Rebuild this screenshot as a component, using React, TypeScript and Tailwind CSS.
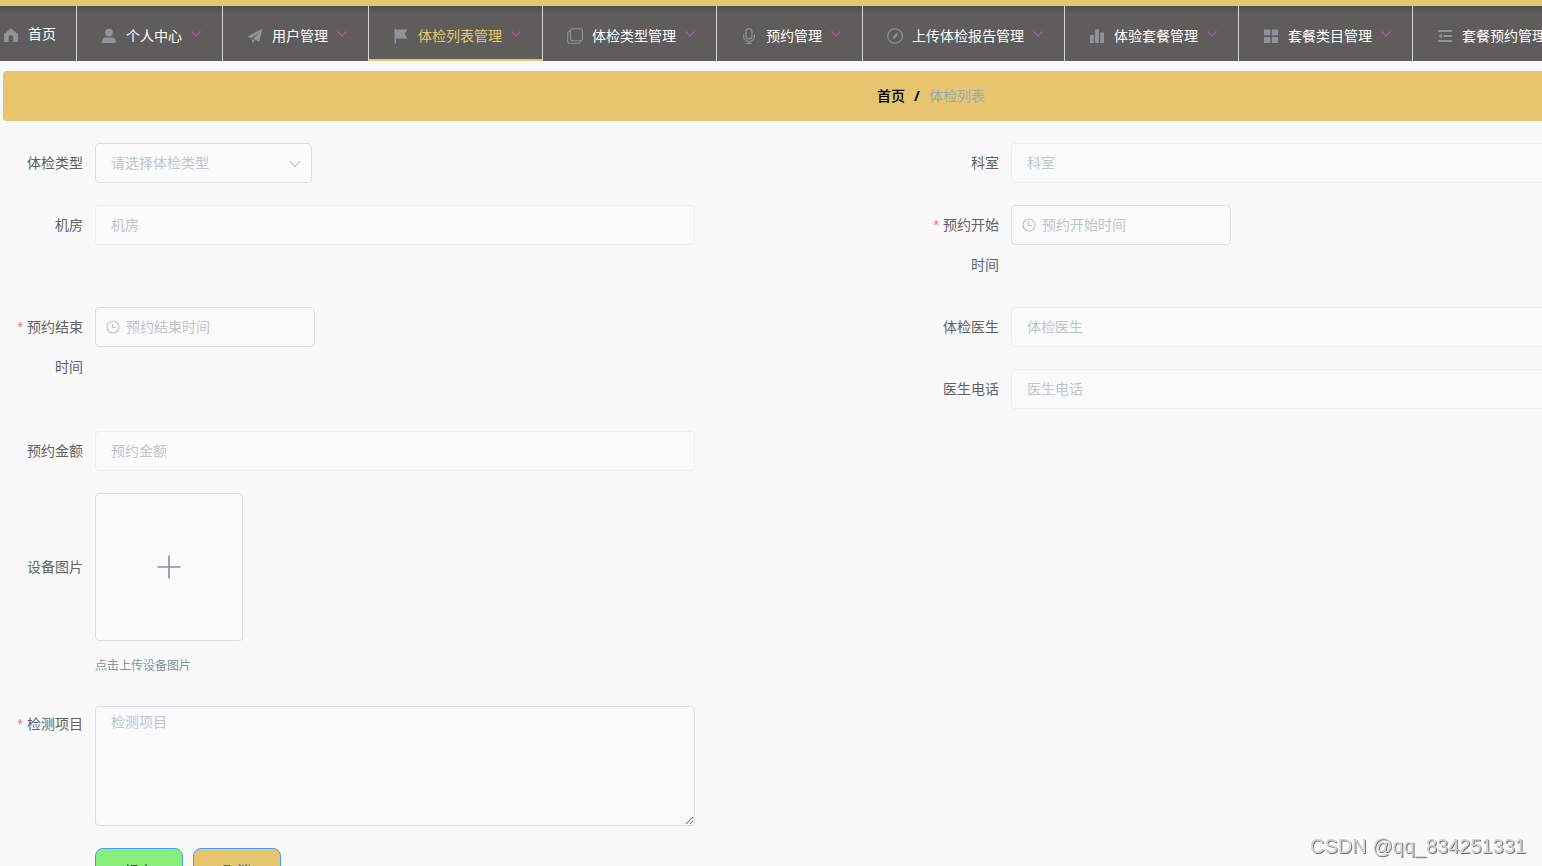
import { useState } from "react"
import type { ReactNode } from "react"

type MenuItem = {
  label: string
  icon: ReactNode
  active?: boolean
}

const menu: MenuItem[] = [
  {
    label: "个人中心",
    icon: (
      <g fill="currentColor">
        <circle cx="8" cy="4.6" r="3.9" />
        <path d="M1 14.2C1 11.4 2.8 9.6 5.2 9.6h5.6c2.4 0 4.2 1.8 4.2 4.6 0 .5-.3.8-.8.8H1.8c-.5 0-.8-.3-.8-.8z" />
      </g>
    ),
  },
  {
    label: "用户管理",
    icon: (
      <g fill="currentColor">
        <path d="M15.4.8.6 8.4l4 1.9L12.6 4 6.2 10.9l6 2.9z" />
        <path d="M5.2 11.4v4.2l2.5-3.1z" />
      </g>
    ),
  },
  {
    label: "体检列表管理",
    active: true,
    icon: <path fill="currentColor" d="M1.5.8H3v.7h11.5l-2.9 4.4 2.9 4.6H3v4.9H1.5z" />,
  },
  {
    label: "体检类型管理",
    icon: (
      <g fill="none" stroke="currentColor" strokeWidth="1.1">
        <rect x="3.5" y=".8" width="12" height="12" rx="2" />
        <path d="M3.3 3.2h-.6a2 2 0 0 0-2 2v8.1a2 2 0 0 0 2 2h8.6a2 2 0 0 0 2-2v-.4" />
      </g>
    ),
  },
  {
    label: "预约管理",
    icon: (
      <g fill="none" stroke="currentColor" strokeWidth="1.1">
        <rect x="5" y=".6" width="6" height="10.4" rx="3" />
        <path d="M2.5 6.5V8a5.5 5.5 0 0 0 11 0V6.5M8 13.5v2M5.3 15.4h5.4" />
      </g>
    ),
  },
  {
    label: "上传体检报告管理",
    icon: (
      <>
        <circle cx="8" cy="8" r="7.3" fill="none" stroke="currentColor" strokeWidth="1.1" />
        <path fill="currentColor" d="M11 4.3 9.3 9.1 5.5 12l1.6-4.9z" />
      </>
    ),
  },
  {
    label: "体验套餐管理",
    icon: <path fill="currentColor" d="M1 7h3.800v8H1zM6.100 1.200h3.800V15H6.100zM11.200 4.600H15V15h-3.800z" />,
  },
  {
    label: "套餐类目管理",
    icon: <path fill="currentColor" d="M1 1.500h6.200v5.700H1zM8.800 1.500H15v5.700H8.800zM1 9h6.200v6H1zM8.800 9H15v6H8.800z" />,
  },
  {
    label: "套餐预约管理",
    icon: <path fill="currentColor" d="M1 2h14v2H1zM6.500 7H15v2H6.500zM1 12h14v2H1zM1.500 8l3.300-2.600v5.200z" />,
  },
]

function MenuIcon({ children }: { children: ReactNode }) {
  return (
    <svg viewBox="0 0 16 16" className="size-4 text-[#909399]" aria-hidden="true">
      {children}
    </svg>
  )
}

function Chevron({ className }: { className: string }) {
  return (
    <svg viewBox="0 0 12 12" fill="none" stroke="currentColor" className={className} aria-hidden="true">
      <path d="m1.500 3.500 4.500 4.500 4.500-4.500" />
    </svg>
  )
}

function Clock() {
  return (
    <svg
      viewBox="0 0 14 14"
      fill="none"
      stroke="currentColor"
      strokeWidth="1.200"
      className="pointer-events-none absolute left-[11px] top-[13px] size-3.5 text-[#c0c4cc]"
      aria-hidden="true"
    >
      <circle cx="7" cy="7" r="6" />
      <path d="M6.500 3.500v4H10" />
    </svg>
  )
}

type FieldProps = {
  id: string
  label: string
  required?: boolean
  className?: string
  labelClass?: string
  children: ReactNode
}

function Field({ id, label, required, className = "", labelClass = "leading-10", children }: FieldProps) {
  return (
    <div className={`flex items-start ${className}`}>
      <label htmlFor={id} className={`w-20 shrink-0 pr-3 text-right text-[#606266] ${labelClass}`}>
        {required && <span className="mr-1 text-[#f56c6c]">*</span>}
        {label}
      </label>
      {children}
    </div>
  )
}

function DisabledInput({ id, placeholder }: { id: string; placeholder: string }) {
  return (
    <input
      id={id}
      disabled
      placeholder={placeholder}
      className="h-10 w-[600px] rounded border border-[#eeeff2] bg-[#fbfbfb] px-[15px] placeholder:text-[#c0c4cc]"
    />
  )
}

function DateInput({ id, placeholder }: { id: string; placeholder: string }) {
  return (
    <div className="relative">
      <Clock />
      <input
        id={id}
        placeholder={placeholder}
        className="h-10 w-[220px] rounded border border-[#dcdfe6] bg-[#fbfbfb] pl-[30px] pr-2 placeholder:text-[#c0c4cc]"
      />
    </div>
  )
}

export default function App() {
  const [type, setType] = useState("")

  return (
    <div className="min-h-screen overflow-x-hidden bg-[#f8f9fb] font-['Liberation_Sans','Noto_Sans_CJK_SC',sans-serif] text-sm">
      <header className="border-t-6 border-[#e6c56e]">
        <nav className="flex h-[55px] min-w-[1856px] bg-[#5f5d5b] bg-linear-to-b from-[#535150] to-[#5f5d5b] to-15% whitespace-nowrap text-white">
          <a href="#home" className="flex items-center border-r border-[#d5d5d5] pr-5">
            <span className="mr-1 flex w-6 justify-center pt-0.5 pr-0.5">
              <svg viewBox="0 0 16 16" className="size-4 text-[#909399]" aria-hidden="true">
                <path fill="currentColor" d="M8 1.200 1 7.300V15h4.600v-4.300a2.400 2.400 0 0 1 4.800 0V15H15V7.300z" />
              </svg>
            </span>
            首页
          </a>
          {menu.map((item) => (
            <a
              key={item.label}
              href="#menu"
              className={`flex items-center border-r border-r-[#d5d5d5] px-5 ${
                item.active ? "border-b-2 border-b-[#e6c56e] pt-1.5 text-[#e6c56e]" : "pt-1"
              }`}
            >
              <span className="mr-[5px] flex w-6 justify-center">
                <MenuIcon>{item.icon}</MenuIcon>
              </span>
              {item.label}
              <Chevron className="mb-1 ml-2 size-3 stroke-[1.2] text-[#c2559b]" />
            </a>
          ))}
        </nav>
      </header>

      <main className="ml-[3px] mt-2.5 min-w-[1856px]">
        <div className="flex h-[50px] items-center justify-center rounded bg-[#e6c56e]">
          <a href="#home" className="font-medium text-black">
            首页
          </a>
          <span className="mx-[9px] font-['Noto_Sans',sans-serif] font-bold text-black">/</span>
          <span className="text-[#97a8be]">体检列表</span>
        </div>

        <form className="mt-2.5 grid grid-cols-2 gap-y-[22px] bg-[#f9f9f9] p-3" onSubmit={(e) => e.preventDefault()}>
          <Field id="type" label="体检类型">
            <div className="relative">
              <select
                id="type"
                value={type}
                onChange={(e) => setType(e.target.value)}
                className="h-10 w-[217px] appearance-none rounded border border-[#dcdfe6] bg-[#fbfbfb] px-[15px] text-[#c0c4cc]"
              >
                <option value="">请选择体检类型</option>
              </select>
              <Chevron className="pointer-events-none absolute right-2.5 top-3.5 size-3.5 text-[#c0c4cc]" />
            </div>
          </Field>
          <Field id="dept" label="科室">
            <DisabledInput id="dept" placeholder="科室" />
          </Field>
          <Field id="room" label="机房">
            <DisabledInput id="room" placeholder="机房" />
          </Field>
          <Field id="start" label="预约开始时间" required>
            <DateInput id="start" placeholder="预约开始时间" />
          </Field>
          <Field id="end" label="预约结束时间" required className="row-span-2">
            <DateInput id="end" placeholder="预约结束时间" />
          </Field>
          <Field id="doctor" label="体检医生">
            <DisabledInput id="doctor" placeholder="体检医生" />
          </Field>
          <Field id="phone" label="医生电话">
            <DisabledInput id="phone" placeholder="医生电话" />
          </Field>
          <Field id="amount" label="预约金额" className="col-span-2">
            <DisabledInput id="amount" placeholder="预约金额" />
          </Field>
          <Field id="photo" label="设备图片" className="col-span-2" labelClass="leading-[148px]">
            <div>
              <button
                id="photo"
                type="button"
                className="grid size-[148px] place-items-center rounded border border-[#dcdfe6] bg-[#fbfbfb]"
              >
                <svg viewBox="0 0 24 24" className="size-6 text-[#8c939d]" aria-hidden="true">
                  <path fill="none" stroke="currentColor" strokeWidth="1.700" d="M12 .5v23M.5 12h23" />
                </svg>
              </button>
              <p className="mt-[7px] text-xs leading-9 text-[#8492a6]">点击上传设备图片</p>
            </div>
          </Field>
          <Field id="items" label="检测项目" required className="col-span-2" labelClass="leading-9">
            <textarea
              id="items"
              placeholder="检测项目"
              className="h-[120px] w-[600px] resize-y rounded border border-[#dcdfe6] bg-[#fbfbfb] px-[15px] py-[5px] leading-5 placeholder:text-[#c0c4cc]"
            />
          </Field>
          <div className="col-span-2 flex gap-2.5 pl-20">
            <button type="submit" className="h-[46px] w-[88px] rounded-lg border border-[#409eff] bg-[#88ee7c] text-[#333]">
              提交
            </button>
            <button type="button" className="h-[46px] w-[88px] rounded-lg border border-[#409eff] bg-[#e6c56e] text-[#606266]">
              取消
            </button>
          </div>
        </form>
      </main>

      <p className="pointer-events-none fixed right-4 bottom-1.5 font-['Liberation_Sans',sans-serif] text-xl text-[#d4d4d4] [text-shadow:1px_1px_0_#777]">
        CSDN @qq_834251331
      </p>
    </div>
  )
}
